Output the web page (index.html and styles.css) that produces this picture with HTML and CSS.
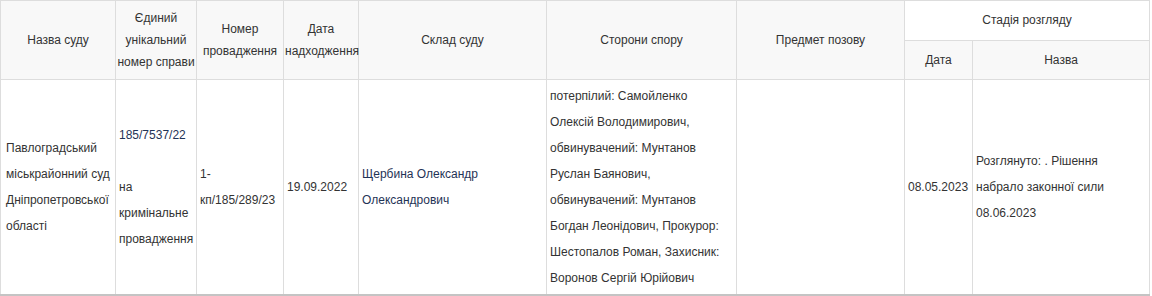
FILE: index.html
```html
<!DOCTYPE html>
<html lang="uk">
<head>
    <meta charset="UTF-8">
    <meta name="viewport" content="width=device-width, initial-scale=1.0">
    <title>Судові справи</title>
    <link rel="stylesheet" href="styles.css">
</head>
<body>

    <!-- Cases table -->
    <table class="cases">
        <colgroup>
            <col class="c-court">
            <col class="c-num">
            <col class="c-proc">
            <col class="c-date">
            <col class="c-judge">
            <col class="c-sides">
            <col class="c-subject">
            <col class="c-sdate">
            <col class="c-sname">
        </colgroup>
        <thead>
            <tr>
                <th rowspan="2">Назва суду</th>
                <th rowspan="2">Єдиний унікальний номер справи</th>
                <th rowspan="2">Номер провадження</th>
                <th rowspan="2">Дата надходження</th>
                <th rowspan="2">Склад суду</th>
                <th rowspan="2">Сторони спору</th>
                <th rowspan="2">Предмет позову</th>
                <th colspan="2" class="group">Стадія розгляду</th>
            </tr>
            <tr>
                <th>Дата</th>
                <th>Назва</th>
            </tr>
        </thead>
        <tbody>
            <tr>
                <td>Павлоградський міськрайонний суд Дніпропетровської області</td>
                <td><a href="#">185/7537/22</a><br><br>на кримінальне провадження</td>
                <td>1-кп/185/289/23</td>
                <td>19.09.2022</td>
                <td><a href="#">Щербина Олександр Олександрович</a></td>
                <td>потерпілий: Самойленко Олексій Володимирович, обвинувачений: Мунтанов Руслан Баянович, обвинувачений: Мунтанов Богдан Леонідович, Прокурор: Шестопалов Роман, Захисник: Воронов Сергій Юрійович</td>
                <td></td>
                <td>08.05.2023</td>
                <td class="stage">Розглянуто: . Рішення набрало законної сили 08.06.2023</td>
            </tr>
        </tbody>
    </table>

</body>
</html>
```

FILE: styles.css
```css
/* Global */
* {
    margin: 0;
    padding: 0;
    box-sizing: border-box;
}
body {
    font-family: 'Liberation Sans', Arial, sans-serif;
    font-size: 12px;
    color: #333;
    background: #fff;
}
a {
    color: #1f3356;
    text-decoration: none;
}

/* Table */
.cases {
    width: 1149px;
    border-collapse: collapse;
    table-layout: fixed;
}
.c-court { width: 115px; }
.c-num { width: 81px; }
.c-proc { width: 87px; }
.c-date { width: 75px; }
.c-judge { width: 188px; }
.c-sides { width: 190px; }
.c-subject { width: 168px; }
.c-sdate { width: 68px; }
.c-sname { width: 177px; }

.cases th,
.cases td {
    border: 1px solid #ddd;
}
.cases th {
    background: #f8f8f8;
    font-weight: normal;
    text-align: center;
    vertical-align: middle;
    line-height: 22px;
    padding: 6px 1px;
}
.cases th.group {
    background: #fff;
}
.cases td {
    text-align: left;
    vertical-align: middle;
    line-height: 26px;
    padding: 3px 3px 3px 3px;
}
.cases td:first-child {
    padding-left: 5px;
    padding-right: 2px;
}
.cases td.stage {
    padding-right: 8px;
}
.cases tbody tr {
    border-bottom: 2px solid #c4c4c4;
}
```
